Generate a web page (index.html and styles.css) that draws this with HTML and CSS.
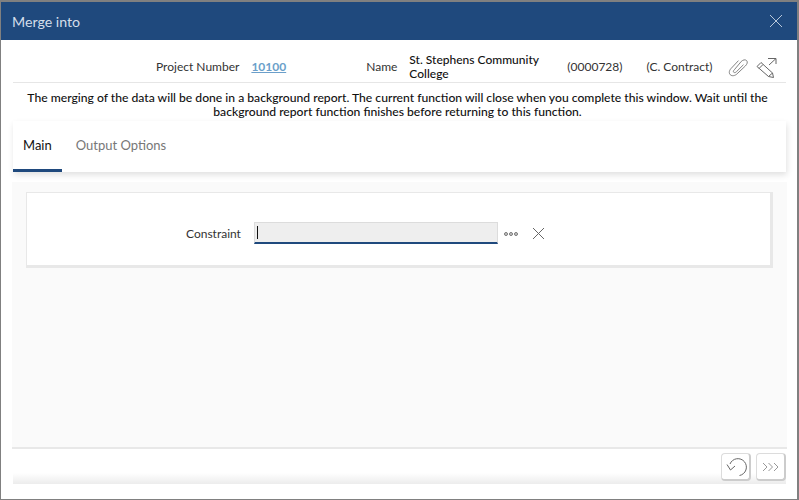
FILE: index.html
```html
<!DOCTYPE html>
<html lang="en">
<head>
    <meta charset="UTF-8">
    <title>Merge into</title>
    <link rel="stylesheet" href="styles.css">
</head>
<body>
    <div class="window">
        <div class="titlebar">
            <span class="title">Merge into</span>
            <svg class="close" width="14" height="14" viewBox="0 0 14 14"><path d="M1 1 L13 13 M13 1 L1 13" stroke="#b9c8da" stroke-width="1" fill="none"/></svg>
        </div>

        <div class="content">
            <div class="info">
                <span class="info-label">Project Number</span>
                <a class="info-link" href="#">10100</a>
                <span class="info-label name-label">Name</span>
                <span class="info-name">St. Stephens Community College</span>
                <span class="info-code">(0000728)</span>
                <span class="info-type">(C. Contract)</span>
                <svg class="clip" width="20" height="20" viewBox="0 0 22 22"><path d="M7 14 L14.500 5 C16.500 3 19 2.500 20.500 4 C22 5.500 21 8 19 10 L10 18.500 C8 20.500 4.500 21.500 2.500 19.500 C0.500 17.500 1.500 14.500 3.500 12.500 L11.500 4" stroke="#777" stroke-width="1" fill="none"/><path d="M7 14 C6 15 5.500 16 6.300 16.800 C7.200 17.600 8.500 17 9.500 16 L17 8.500" stroke="#777" stroke-width="1" fill="none"/></svg>
                <svg class="edit" width="22" height="22" viewBox="0 0 22 22"><path d="M1 10.500 L5 6.500 L16.500 17 L17.500 21.500 L12.500 20.500 Z M3 12.500 L7 8.500 M12.500 20.500 L16.500 17" stroke="#666" stroke-width="1" fill="none"/><path d="M12 2.500 H20 V8 M20 2.500 L13 9" stroke="#666" stroke-width="1" fill="none"/></svg>
            </div>

            <p class="notice">The merging of the data will be done in a background report. The current function will close when you complete this window. Wait until the background report function finishes before returning to this function.</p>

            <div class="tabs">
                <div class="tab tab-active">Main</div>
                <div class="tab">Output Options</div>
            </div>

            <div class="panel">
                <div class="card">
                    <label class="field-label" for="constraint">Constraint</label>
                    <div class="field-input" id="constraint"><span class="caret"></span></div>
                    <span class="dots"><i></i><i></i><i></i></span>
                    <svg class="clear" width="13" height="13" viewBox="0 0 13 13"><path d="M1 1 L12 12 M12 1 L1 12" stroke="#666" stroke-width="1" fill="none"/></svg>
                </div>
            </div>

            <div class="footer">
                <button class="btn" type="button">
                    <svg width="22" height="22" viewBox="0 0 22 22"><path d="M5 8 A 8.500 8.500 0 1 1 14.500 19.500" stroke="#666" stroke-width="1" fill="none"/><path d="M2 8.500 L5.500 14 L10 10" stroke="#666" stroke-width="1" fill="none"/></svg>
                </button>
                <button class="btn" type="button">
                    <svg width="18" height="12" viewBox="0 0 18 12"><path d="M1 2 L5 6 L1 10 M6.500 2 L10.500 6 L6.500 10 M12 2 L16 6 L12 10" stroke="#999" stroke-width="1" fill="none"/></svg>
                </button>
            </div>
        </div>
    </div>
</body>
</html>
```

FILE: styles.css
```css
html, body {
    margin: 0;
    height: 100%;
}

body {
    font-family: Lato, "Liberation Sans", sans-serif;
    font-size: 12px;
    color: #222;
    background: #fff;
}

.window {
    box-sizing: border-box;
    width: 799px;
    height: 500px;
    border: 1px solid #808080;
    border-top-width: 2px;
    border-right-width: 2px;
    display: flex;
    flex-direction: column;
    background: #fff;
}

.titlebar {
    height: 38px;
    flex: none;
    background: #1f497d;
    display: flex;
    align-items: center;
    justify-content: space-between;
    padding: 0 14px 0 11px;
}

.title {
    color: #d4deea;
    font-size: 14.200px;
}

.content {
    flex: 1;
    min-height: 0;
    display: flex;
    flex-direction: column;
    padding: 0 11px 0 12px;
}

.info {
    height: 43px;
    flex: none;
    box-sizing: border-box;
    padding-top: 11px;
    border-bottom: 1px solid #e6e6e6;
    display: flex;
    align-items: center;
    color: #333;
    white-space: nowrap;
}

.info-label {
    margin-left: 143px;
    flex: none;
}

.info-link {
    margin-left: 12px;
    flex: none;
    color: #6b9fca;
    font-weight: 700;
}

.name-label {
    margin-left: 80px;
}

.info-name {
    margin-left: 12px;
    width: 158px;
    flex: none;
    box-sizing: border-box;
    padding-right: 20px;
    white-space: normal;
    line-height: 14px;
    font-weight: 500;
    color: #111;
}

.info-code {
    flex: none;
}

.info-type {
    margin-left: 24px;
    flex: none;
}

.clip {
    margin-left: 16px;
    flex: none;
}

.edit {
    margin-left: 8px;
    flex: none;
}

.notice {
    margin: 8px 0 0;
    padding-right: 4px;
    height: 30px;
    flex: none;
    text-align: center;
    font-size: 12.150px;
    line-height: 14px;
    color: #111;
    font-weight: 500;
}

.tabs {
    height: 51px;
    flex: none;
    display: flex;
    background: #fff;
    box-shadow: 1px 3px 6px rgba(0, 0, 0, 0.12);
    position: relative;
}

.tab {
    box-sizing: border-box;
    padding: 16px 10px 0;
    font-size: 13px;
    color: #777;
    margin-right: 4px;
}

.tab-active {
    color: #111;
    border-bottom: 3px solid #1f497d;
}

.panel {
    flex: 1;
    min-height: 0;
    margin: 10px -1px 0;
    padding: 10px 14px 0;
    background: #fafafa;
    border-bottom: 2px solid #e8e8e8;
}

.card {
    box-sizing: border-box;
    height: 76px;
    padding: 7px 0 0 159px;
    background: #fff;
    border: 1px solid #e8e8e8;
    border-right-width: 3px;
    border-bottom-width: 3px;
    display: flex;
    align-items: center;
    color: #333;
}

.field-label {
    width: 68px;
    margin-top: 2px;
}

.field-input {
    box-sizing: border-box;
    width: 244px;
    height: 22px;
    background: #eee;
    border: 1px solid #dcdcdc;
    border-bottom: 2px solid #1f497d;
    display: flex;
    align-items: center;
    padding-left: 2px;
}

.caret {
    width: 1px;
    height: 13px;
    background: #111;
}

.dots {
    display: flex;
    gap: 1px;
    margin: 2px 0 0 6px;
}

.dots i {
    box-sizing: border-box;
    width: 4px;
    height: 4px;
    background: #ccc;
    border: 1px solid #777;
    border-radius: 50%;
}

.clear {
    margin: 2px 0 0 14px;
}

.footer {
    height: 50px;
    flex: none;
    box-sizing: border-box;
    display: flex;
    justify-content: flex-end;
    gap: 5px;
    padding-top: 4px;
    background: linear-gradient(#fff 0, #fff 24px, #ececec 35px, #fff 35px);
}

.btn {
    box-sizing: border-box;
    width: 30px;
    height: 28px;
    padding: 0;
    background: #fff;
    border: 1px solid #dcdcdc;
    border-right: 2px solid #ccc;
    border-bottom: 2px solid #ccc;
    border-radius: 4px;
    display: flex;
    align-items: center;
    justify-content: center;
}
```
